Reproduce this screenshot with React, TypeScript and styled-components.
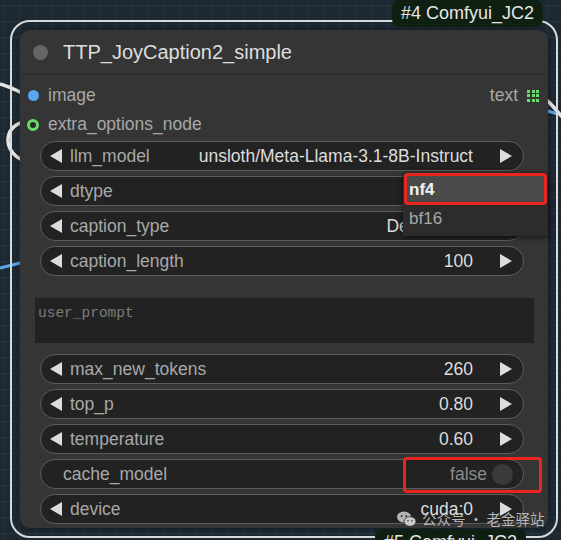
import React from "react";
import styled, { createGlobalStyle } from "styled-components";

const Global = createGlobalStyle`
  html, body { margin: 0; padding: 0; background: #1d2a34; overflow: hidden; }
  * { box-sizing: border-box; }
`;

const Canvas = styled.div`
  position: relative;
  width: 561px;
  height: 540px;
  overflow: hidden;
  font-family: "Liberation Sans", Arial, sans-serif;
  background-color: #1c2832;
  background-image:
    linear-gradient(to right, rgba(255,255,255,0.05) 1px, transparent 1px),
    linear-gradient(to bottom, rgba(255,255,255,0.05) 1px, transparent 1px);
  background-size: 16px 16px;
  background-position: 3px 5px;
`;

const Links = styled.svg`
  position: absolute;
  left: 0;
  top: 0;
  width: 561px;
  height: 540px;
`;

const Node = styled.div`
  position: absolute;
  left: 20px;
  top: 30px;
  width: 528px;
  height: 498px;
  background: #353535;
  border-radius: 10px;
  outline: 2px solid #d9d9d9;
  outline-offset: 8px;
  box-shadow: 0 0 6px rgba(0,0,0,0.4);
  display: flex;
  flex-direction: column;
`;

const TitleBar = styled.div`
  height: 45px;
  display: flex;
  align-items: center;
  padding-left: 13px;
  border-bottom: 1px solid #2a2a2a;
`;

const TitleDot = styled.div`
  width: 15px;
  height: 15px;
  border-radius: 50%;
  background: #666;
  margin-right: 15px;
`;

const Title = styled.div`
  font-size: 20px;
  color: #dedede;
`;

const Body = styled.div`
  padding-top: 6px;
  display: flex;
  flex-direction: column;
`;

const SlotRow = styled.div`
  height: 29px;
  display: flex;
  align-items: center;
  padding: 0 9px 0 8px;
  font-size: 17.5px;
  color: #a8a8a8;
`;

const SlotDot = styled.div<{ $ring?: boolean }>`
  width: ${(p) => (p.$ring ? 12 : 11)}px;
  height: ${(p) => (p.$ring ? 12 : 11)}px;
  border-radius: 50%;
  background: ${(p) => (p.$ring ? "#2b2b2b" : "#58a6ee")};
  border: ${(p) => (p.$ring ? "3px solid #66dd66" : "none")};
  margin-right: 9px;
  margin-left: ${(p) => (p.$ring ? -1 : 0)}px;
`;

const Spacer = styled.div`
  flex: 1;
`;

const GridIcon = styled.div`
  display: grid;
  grid-template-columns: repeat(3, 3px);
  grid-template-rows: repeat(3, 3px);
  gap: 1.5px;
  margin-left: 9px;
  span { background: #66dd66; display: block; }
`;

const Widgets = styled.div`
  margin-top: 2px;
  display: flex;
  flex-direction: column;
  gap: 5px;
`;

const Pill = styled.div<{ $plain?: boolean }>`
  height: 30px;
  margin: 0 24px 0 20px;
  border: 1px solid #5c5c5c;
  border-radius: 15px;
  background: #222;
  display: flex;
  align-items: center;
  padding: ${(p) => (p.$plain ? "0 10px 0 22px" : "0 11px 0 9px")};
  font-size: 17.5px;
  white-space: nowrap;
`;

const Label = styled.span<{ $plain?: boolean }>`
  color: #a8a8a8;
  margin-left: ${(p) => (p.$plain ? 0 : 8)}px;
`;

const Value = styled.span<{ $dim?: boolean }>`
  color: ${(p) => (p.$dim ? "#8a8a8a" : "#dcdcdc")};
  margin-right: ${(p) => (p.$dim ? 5 : 27)}px;
`;

const Toggle = styled.div`
  width: 21px;
  height: 21px;
  border-radius: 50%;
  background: #3b3b3b;
`;

const TextArea = styled.div`
  height: 45px;
  margin: 17px 14px 6px 15px;
  background: #222;
  padding: 7px 3px 4px;
  font-family: "Liberation Mono", "Courier New", monospace;
  font-size: 14.5px;
  line-height: 17px;
  color: #7c7c7c;
`;

const Badge = styled.div<{ $left: number; $top: number }>`
  position: absolute;
  left: ${(p) => p.$left}px;
  top: ${(p) => p.$top}px;
  height: 27px;
  padding: 0 9px;
  border-radius: 8px;
  background: #0f1f11;
  color: #e6e6e6;
  font-size: 18px;
  display: flex;
  align-items: center;
  white-space: nowrap;
`;

const Menu = styled.div`
  position: absolute;
  left: 403px;
  top: 173px;
  width: 145px;
  padding: 2px 2px 3px;
  background: #2c2c2c;
  box-shadow: 0 1px 5px rgba(0,0,0,0.7);
  font-size: 17px;
`;

const MenuItem = styled.div<{ $active?: boolean }>`
  height: 29px;
  display: flex;
  align-items: center;
  padding-left: 4px;
  background: ${(p) => (p.$active ? "#4a4a4a" : "transparent")};
  color: ${(p) => (p.$active ? "#f2f2f2" : "#a8a8a8")};
  font-weight: ${(p) => (p.$active ? 700 : 400)};
`;

const Highlight = styled.div<{ $left: number; $top: number; $w: number; $h: number }>`
  position: absolute;
  left: ${(p) => p.$left}px;
  top: ${(p) => p.$top}px;
  width: ${(p) => p.$w}px;
  height: ${(p) => p.$h}px;
  border: 3px solid #e8251f;
  border-radius: 4px;
`;

const Watermark = styled.div`
  position: absolute;
  left: 397px;
  top: 508px;
  display: flex;
  align-items: center;
  gap: 6px;
  font-family: "Noto Sans CJK SC", "Liberation Sans", sans-serif;
  font-size: 14.5px;
  color: rgba(215,215,215,0.82);
  white-space: nowrap;
`;

const LeftArrow = () => (
  <svg width="12" height="14" viewBox="0 0 12 14">
    <polygon points="12,0 12,14 0,7" fill="#dcdcdc" />
  </svg>
);

const RightArrow = () => (
  <svg width="12" height="14" viewBox="0 0 12 14">
    <polygon points="0,0 12,7 0,14" fill="#dcdcdc" />
  </svg>
);

const WeChat = () => (
  <svg width="19" height="16" viewBox="0 0 19 16">
    <ellipse cx="7" cy="6" rx="7" ry="5.6" fill="#b5b5b5" />
    <circle cx="4.6" cy="5" r="1" fill="#3a3a3a" />
    <circle cx="9.2" cy="5" r="1" fill="#3a3a3a" />
    <ellipse cx="13" cy="10.5" rx="6" ry="4.8" fill="#c9c9c9" stroke="#2a2a2a" strokeWidth="0.8" />
    <circle cx="11" cy="9.8" r="0.8" fill="#3a3a3a" />
    <circle cx="15" cy="9.8" r="0.8" fill="#3a3a3a" />
  </svg>
);

type W = { label: string; value?: string; plain?: boolean };

const top: W[] = [
  { label: "llm_model", value: "unsloth/Meta-Llama-3.1-8B-Instruct" },
  { label: "dtype", value: "nf4" },
  { label: "caption_type", value: "Descriptive" },
  { label: "caption_length", value: "100" },
];

const bottom: W[] = [
  { label: "max_new_tokens", value: "260" },
  { label: "top_p", value: "0.80" },
  { label: "temperature", value: "0.60" },
  { label: "cache_model", value: "false", plain: true },
  { label: "device", value: "cuda:0" },
];

const Widget = ({ w }: { w: W }) =>
  w.plain ? (
    <Pill $plain>
      <Label $plain>{w.label}</Label>
      <Spacer />
      <Value $dim>{w.value}</Value>
      <Toggle />
    </Pill>
  ) : (
    <Pill>
      <LeftArrow />
      <Label>{w.label}</Label>
      <Spacer />
      <Value>{w.value}</Value>
      <RightArrow />
    </Pill>
  );

export default function App() {
  return (
    <>
      <Global />
      <Canvas>
        <Links viewBox="0 0 561 540">
          <path d="M0,84 C8,86 14,89 24,94" stroke="#e6e6e6" strokeWidth="3.5" fill="none" />
          <path d="M24,122 C4,126 2,150 22,160" stroke="#e6e6e6" strokeWidth="3.5" fill="none" />
          <path d="M0,268 L24,262" stroke="#5aa8ee" strokeWidth="3" fill="none" />
          <path d="M544,98 C552,104 556,110 563,118" stroke="#e6e6e6" strokeWidth="3.5" fill="none" />
          <path d="M544,110 L558,114" stroke="#5aa8ee" strokeWidth="3" fill="none" />
        </Links>
        <Node>
          <TitleBar>
            <TitleDot />
            <Title>TTP_JoyCaption2_simple</Title>
          </TitleBar>
          <Body>
            <SlotRow>
              <SlotDot />
              <span>image</span>
              <Spacer />
              <span>text</span>
              <GridIcon>
                {Array.from({ length: 9 }).map((_, i) => (
                  <span key={i} />
                ))}
              </GridIcon>
            </SlotRow>
            <SlotRow>
              <SlotDot $ring />
              <span>extra_options_node</span>
            </SlotRow>
            <Widgets>
              {top.map((w) => (
                <Widget key={w.label} w={w} />
              ))}
              <TextArea>user_prompt</TextArea>
              {bottom.map((w) => (
                <Widget key={w.label} w={w} />
              ))}
            </Widgets>
          </Body>
        </Node>
        <Badge $left={392} $top={0}>#4 Comfyui_JC2</Badge>
        <Badge $left={375} $top={529}>#5 Comfyui_JC2</Badge>
        <Menu>
          <MenuItem $active>nf4</MenuItem>
          <MenuItem>bf16</MenuItem>
        </Menu>
        <Highlight $left={404} $top={173} $w={143} $h={32} />
        <Highlight $left={403} $top={457} $w={139} $h={36} />
        <Watermark>
          <WeChat />
          <span>公众号 · 老金驿站</span>
        </Watermark>
      </Canvas>
    </>
  );
}
